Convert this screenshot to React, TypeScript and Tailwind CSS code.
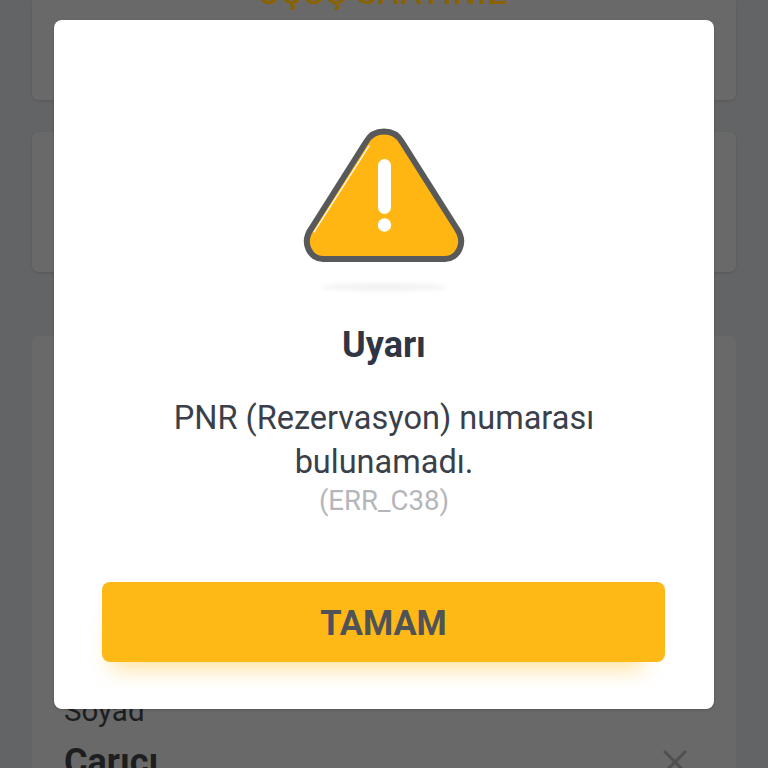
const roboto = "font-['Roboto','Liberation_Sans',sans-serif]";

// Uyarı üçgeni + altındaki gölge
const WarningIcon = () => (
  <svg width="170" height="170" viewBox="0 0 170 170" fill="none" aria-hidden="true">
    <defs>
      <filter id="blur" x="-20%" y="-200%" width="140%" height="500%">
        <feGaussianBlur stdDeviation="2.5" />
      </filter>
    </defs>
    <ellipse cx="85" cy="161" rx="63" ry="3" fill="#eeeeef" filter="url(#blur)" />
    <path
      d="M67 16 C75 2 95 2 103 16 L158 103 C168 118 158 133 146 133 L24 133 C12 133 2 118 12 103 Z"
      fill="#ffb612"
      stroke="#58595b"
      strokeWidth="6"
      strokeLinejoin="round"
    />
    <path d="M70 20 L15 106" stroke="#fff" strokeWidth="1.3" strokeLinecap="round" />
    <rect x="79" y="33" width="13" height="55" rx="6.5" fill="#fff" />
    <circle cx="85.5" cy="99" r="6.7" fill="#fff" />
  </svg>
);

export default function App() {
  return (
    <div className={`relative h-[768px] w-[768px] overflow-hidden bg-[#636466] ${roboto}`}>
      {/* arka plan kartları */}
      <div className="flex h-full flex-col px-8">
        <div className="h-[100px] shrink-0 rounded-b-md bg-[#696969] text-center shadow-sm">
          <div className="-mt-[25px] text-[32px] font-medium leading-[36px] tracking-wider text-[#8a6200]">
            UÇUŞ SAATİNİZ
          </div>
        </div>
        <div className="mt-8 h-[140px] shrink-0 rounded-md bg-[#696969] shadow-sm" />
        <div className="mt-16 flex flex-1 flex-col justify-end rounded-t-md bg-[#696969] pl-8 pr-12">
          <div className="text-[29.5px] leading-[32px] text-[#1d1e20]">Soyad</div>
          <div className="-mb-[14px] mt-[15px] flex items-center justify-between">
            <span className="text-[36px] font-bold leading-[40px] text-[#1d1e20]">Carıcı</span>
            <svg width="26" height="26" viewBox="0 0 26 26" stroke="#505050" strokeWidth="3" aria-hidden="true">
              <path d="M2 2 L24 24 M24 2 L2 24" />
            </svg>
          </div>
        </div>
      </div>

      {/* uyarı penceresi */}
      <div className="absolute inset-0 px-[54px] pt-[20px]">
        <div className="flex h-[689px] flex-col items-center rounded-lg bg-white px-12 pt-[106px] shadow-[0_1px_3px_rgba(0,0,0,0.2)]">
          <WarningIcon />
          <h2 className="mt-[29px] text-[36px] font-bold leading-[40px] text-[#2f3542]">Uyarı</h2>
          <p className="mt-[31px] w-[460px] text-center text-[32.5px] leading-[44px] text-[#3a3f4a]">
            PNR (Rezervasyon) numarası bulunamadı.
          </p>
          <p className="text-[27.6px] leading-[34px] text-[#b4b6ba]">(ERR_C38)</p>
          <button className="mt-[64px] flex h-[80px] w-[563px] shrink-0 items-center justify-center self-start rounded-lg bg-[#ffb916] pt-[3px] text-[34.5px] font-bold text-[#4f5358] shadow-[-6px_22px_22px_-16px_rgba(255,185,22,0.45)]">
            TAMAM
          </button>
        </div>
      </div>
    </div>
  );
}
